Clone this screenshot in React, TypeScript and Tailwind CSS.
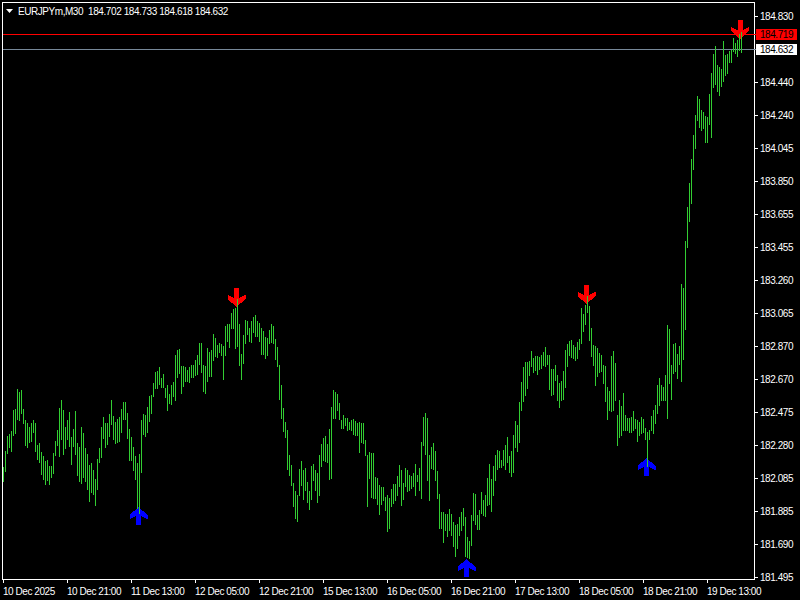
const font = "[font-family:'Liberation_Sans',Arial,sans-serif] text-[10px] tracking-[-0.45px]";

// [top, bottom] of each bar, one bar every 2px starting at x=3
const bars: [number, number][] = [
  [467,481],[451,471],[436,453],[434,447],[431,451],[410,435],[409,433],[389,419],[392,420],[390,413],
  [409,423],[420,445],[423,447],[427,442],[423,441],[420,432],[423,451],[445,459],[443,462],[452,474],
  [456,479],[461,484],[460,480],[466,484],[466,477],[453,473],[441,455],[430,445],[408,456],[400,439],
  [410,454],[427,448],[420,439],[412,446],[437,464],[429,446],[411,454],[443,475],[447,481],[427,483],
  [433,477],[448,481],[454,489],[465,501],[463,492],[470,494],[479,505],[459,489],[448,462],[427,457],
  [417,438],[423,447],[423,444],[414,436],[400,424],[416,439],[422,443],[419,442],[417,441],[409,432],
  [402,419],[402,419],[413,438],[429,460],[437,460],[447,470],[456,479],[463,508],[454,513],[420,472],
  [414,434],[415,436],[407,432],[396,421],[395,413],[383,396],[372,388],[371,388],[367,384],[378,387],
  [374,387],[388,397],[385,410],[394,403],[385,404],[382,396],[355,400],[350,377],[349,373],[366,393],
  [366,386],[367,381],[370,381],[367,382],[365,377],[365,377],[360,375],[355,374],[343,364],[343,372],
  [365,391],[366,393],[348,381],[352,376],[350,376],[334,360],[338,356],[345,357],[343,352],[344,355],
  [346,379],[326,355],[324,341],[324,347],[313,328],[309,328],[308,348],[299,346],[324,365],[354,379],
  [335,363],[320,343],[321,334],[328,341],[321,342],[317,332],[315,336],[321,336],[323,341],[328,354],
  [331,354],[337,358],[338,355],[330,343],[324,342],[326,343],[339,359],[347,366],[365,399],[385,418],
  [408,431],[422,437],[430,469],[455,475],[465,485],[483,506],[491,518],[495,521],[469,495],[461,485],
  [470,499],[468,490],[482,502],[491,509],[466,499],[464,480],[470,490],[473,502],[455,495],[444,466],
  [438,460],[436,461],[444,462],[429,479],[407,478],[390,418],[392,418],[394,410],[403,419],[420,428],
  [415,428],[418,425],[418,430],[422,429],[420,430],[419,434],[421,435],[423,435],[422,452],[423,442],
  [423,443],[440,455],[455,506],[452,478],[453,497],[453,498],[477,498],[478,504],[485,514],[487,504],
  [487,500],[497,510],[495,531],[498,528],[489,506],[484,503],[484,500],[476,495],[465,486],[470,505],
  [483,499],[468,486],[470,491],[475,490],[476,488],[473,486],[464,495],[475,481],[468,490],[442,498],
  [417,445],[413,454],[418,480],[455,500],[447,468],[443,469],[451,480],[471,498],[494,528],[512,528],
  [512,542],[514,530],[514,536],[509,530],[514,535],[522,546],[525,556],[524,548],[517,535],[512,530],
  [508,525],[517,556],[537,557],[541,558],[515,545],[493,520],[494,524],[515,529],[510,529],[492,513],
  [500,515],[495,516],[478,505],[464,504],[479,511],[466,495],[455,480],[450,469],[451,467],[460,467],
  [450,465],[445,469],[437,462],[456,472],[451,476],[435,472],[421,447],[425,451],[402,442],[382,410],
  [367,401],[362,395],[362,388],[361,375],[351,366],[358,372],[356,370],[356,374],[357,369],[355,368],
  [352,365],[347,366],[355,364],[355,389],[369,395],[369,394],[365,380],[375,400],[383,407],[381,400],
  [371,399],[350,387],[344,366],[341,355],[340,357],[345,358],[347,360],[342,358],[339,349],[308,343],
  [314,331],[305,324],[296,312],[306,340],[328,356],[345,365],[346,385],[348,376],[353,372],[355,371],
  [365,383],[366,401],[387,419],[391,410],[356,411],[351,410],[363,400],[415,445],[400,437],[406,435],
  [393,430],[415,430],[418,430],[418,432],[417,432],[411,430],[419,428],[420,441],[422,435],[417,433],
  [419,432],[428,439],[432,466],[430,439],[416,430],[410,433],[405,423],[385,413],[378,405],[385,400],
  [387,400],[375,400],[325,418],[329,383],[365,399],[344,373],[343,371],[354,378],[346,364],[284,381],
  [288,359],[241,329],[207,247],[183,221],[159,203],[135,169],[115,148],[96,120],[99,127],[110,130],
  [112,128],[116,142],[117,142],[94,124],[73,137],[54,87],[46,84],[65,91],[67,95],[69,86],
  [41,81],[55,75],[54,73],[51,62],[50,62],[38,51],[43,53],[40,56],[34,50],[32,52],
];

const barPath = bars.map(([t, b], i) => `M${3.5 + i * 2} ${t}V${b + 1}`).join('');

// cx = centre of arrow, y = tip
function upArrow(cx: number, y: number) {
  return `${cx},${y} ${cx + 9},${y + 8} ${cx + 9},${y + 12} ${cx + 2.5},${y + 9} ${cx + 2.5},${y + 18} ${cx - 2.5},${y + 18} ${cx - 2.5},${y + 9} ${cx - 9},${y + 12} ${cx - 9},${y + 8}`;
}
function downArrow(cx: number, y: number) {
  return `${cx},${y} ${cx + 9},${y - 8} ${cx + 9},${y - 12} ${cx + 2.5},${y - 9} ${cx + 2.5},${y - 19} ${cx - 2.5},${y - 19} ${cx - 2.5},${y - 9} ${cx - 9},${y - 12} ${cx - 9},${y - 8}`;
}

const prices = [
  '184.830', '', '184.440', '184.240', '184.045', '183.850', '183.655', '183.455', '183.260',
  '183.065', '182.870', '182.670', '182.475', '182.280', '182.085', '181.885', '181.690', '181.495',
];

const times = [
  '10 Dec 2025', '10 Dec 21:00', '11 Dec 13:00', '12 Dec 05:00', '12 Dec 21:00', '15 Dec 13:00',
  '16 Dec 05:00', '16 Dec 21:00', '17 Dec 13:00', '18 Dec 05:00', '18 Dec 21:00', '19 Dec 13:00',
];

export default function App() {
  return (
    <div className={`relative w-[800px] h-[600px] bg-black overflow-hidden grid grid-cols-[755px_45px] grid-rows-[580px_20px] text-white ${font}`}>
      {/* chart frame */}
      <div className="relative mt-[2px] ml-[2px] w-[753px] h-[578px] border border-white">
        <svg
          width="751"
          height="576"
          viewBox="3 3 751 576"
          className="block overflow-visible"
          shapeRendering="crispEdges"
        >
          <line x1="3" x2="756" y1="34.5" y2="34.5" stroke="#ff0000" />
          <line x1="3" x2="756" y1="49.5" y2="49.5" stroke="#778899" />
          <polygon points={upArrow(138.5, 507)} fill="#0000ff" />
          <polygon points={upArrow(466.5, 559)} fill="#0000ff" />
          <polygon points={upArrow(646.5, 458)} fill="#0000ff" />
          <polygon points={downArrow(236.5, 307)} fill="#ff0000" />
          <polygon points={downArrow(586.5, 304)} fill="#ff0000" />
          <polygon points={downArrow(740, 39)} fill="#ff0000" />
          <path d={barPath} stroke="#32cd32" fill="none" />
        </svg>

        {/* symbol legend */}
        <div className="absolute left-[3px] top-[1px] flex items-center h-[14px] whitespace-pre">
          <svg width="8" height="4" viewBox="0 0 8 4" className="mr-[4px]">
            <polygon points="0,0 7,0 3.5,4" fill="#fff" />
          </svg>
          <span>EURJPYm,M30</span>
          <span className="ml-[5px] tracking-[-0.42px]">184.702 184.733 184.618 184.632</span>
        </div>
      </div>

      {/* price axis */}
      <div className="row-span-2 flex flex-col">
        {prices.map((p, i) => (
          <div key={i} className="h-[33px] shrink-0 flex items-center gap-[2px]">
            <div className="w-[3px] h-px bg-white" />
            <span>{p}</span>
          </div>
        ))}
      </div>

      {/* time axis */}
      <div className="flex pl-[3px]">
        {times.map((t) => (
          <div key={t} className="w-[64px] shrink-0 flex flex-col items-start">
            <div className="w-px h-[3px] bg-white" />
            <span className="mt-[1px] whitespace-nowrap">{t}</span>
          </div>
        ))}
      </div>

      {/* current price tags */}
      <div className="absolute left-[756px] top-[29px] w-[41px] h-[11px] bg-[#ff0000] text-black flex items-center pl-[4px]">184.719</div>
      <div className="absolute left-[756px] top-[44px] w-[41px] h-[11px] bg-white text-black flex items-center pl-[4px]">184.632</div>
    </div>
  );
}
